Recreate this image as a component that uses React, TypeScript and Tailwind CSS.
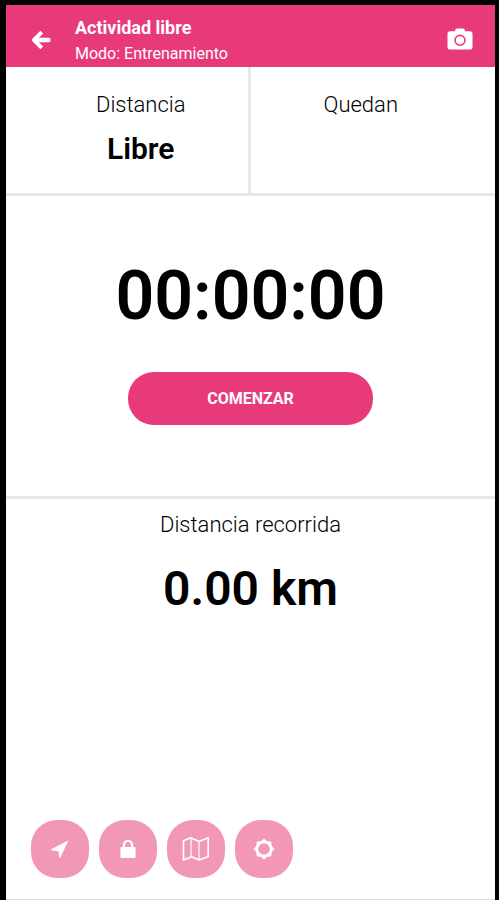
import React from "react";

interface IconProps {
  className?: string;
}

const BackIcon: React.FC<IconProps> = ({ className }) => (
  <svg viewBox="0 0 20 20" className={className} fill="none" stroke="currentColor">
    <path
      d="M10.800 2.200 3 10l7.800 7.800"
      strokeWidth="4"
      strokeLinejoin="round"
    />
    <path d="M4 10h13.500" strokeWidth="4.400" strokeLinecap="round" />
  </svg>
);

const CameraIcon: React.FC<IconProps> = ({ className }) => (
  <svg viewBox="0 0 26 22" className={className} fill="none">
    <path
      fill="currentColor"
      d="M8.500 1.500Q9 .5 10.300 .5h5.400q1.300 0 1.800 1l.8 1.800h4.700q2.500 0 2.500 2.500v13.200q0 2.500-2.500 2.500H3q-2.500 0-2.500-2.500V5.800q0-2.500 2.500-2.500h4.700z"
    />
    <circle cx="13" cy="12.300" r="4.900" stroke="#e83a7b" strokeWidth="1.600" />
  </svg>
);

const NavigateIcon: React.FC<IconProps> = ({ className }) => (
  <svg viewBox="0 0 20 20" className={className} fill="currentColor">
    <path d="M18.600 1.200 10.300 18.600Q9.700 19.600 9.200 18.500L8.600 12.200 1.200 11.300Q.3 10.800 1.300 10.200Z" />
  </svg>
);

const LockIcon: React.FC<IconProps> = ({ className }) => (
  <svg viewBox="0 0 16 20" className={className} fill="none">
    <path d="M4 9V5.800a4 4 0 0 1 8 0V9" stroke="currentColor" strokeWidth="2.200" />
    <rect x=".5" y="8" width="15" height="11" rx="1" fill="currentColor" />
  </svg>
);

const MapIcon: React.FC<IconProps> = ({ className }) => (
  <svg
    viewBox="0 0 28 26"
    className={className}
    fill="none"
    stroke="currentColor"
    strokeLinejoin="round"
  >
    <path d="M1.500 4.800 8.700 1.800 17 5.500 26.200 1.800V20.500L17 24 9.500 20.800 1.500 24Z" strokeWidth="1.700" />
    <path d="M9 2v18.800M17 5.500V24" strokeWidth="1.200" />
  </svg>
);

const SettingsIcon: React.FC<IconProps> = ({ className }) => (
  <svg viewBox="0 0 22 22" className={className} fill="currentColor">
    <path
      fillRule="evenodd"
      d="M11 .5 13.700 3.100 18 3.500 18.800 8 21.500 11 18.800 14 18.200 18.200 13.700 18.900 11 21.500 8.300 18.900 3.800 18.200 3.200 14 .5 11 3.200 8 4 3.500 8.300 3.100ZM11 5.200A5.800 5.800 0 1 0 11 16.800A5.800 5.800 0 1 0 11 5.200Z"
    />
  </svg>
);

const tools = [
  { label: "Ubicación", icon: <NavigateIcon className="h-5 w-5" /> },
  { label: "Bloquear", icon: <LockIcon className="h-5 w-4" /> },
  { label: "Mapa", icon: <MapIcon className="h-[26px] w-7" /> },
  { label: "Ajustes", icon: <SettingsIcon className="h-[22px] w-[22px]" /> },
];

const App: React.FC = () => {
  return (
    <div className="flex min-h-screen flex-col bg-black pt-[5px] pr-1 pl-[6px] font-[Roboto,sans-serif] text-black">
      {/* Header */}
      <header className="flex h-[62px] items-center bg-[#e83a7b] pr-[22px] pl-[25px] text-white">
        <button type="button" aria-label="Volver" className="pt-2">
          <BackIcon className="h-5 w-5" />
        </button>
        <div className="ml-6 flex-1 pt-[9px]">
          <h1 className="text-lg leading-[26px] font-bold">Actividad libre</h1>
          <p className="text-base leading-[26px]">Modo: Entrenamiento</p>
        </div>
        <button type="button" aria-label="Cámara" className="pt-[6px]">
          <CameraIcon className="h-[22px] w-[26px]" />
        </button>
      </header>

      <main className="flex flex-1 flex-col border-b border-[#dedede] bg-white text-center">
        {/* Target distance */}
        <section className="grid h-[129px] grid-cols-2 border-b-[3px] border-[#e8e8e8]">
          <div className="border-r-[3px] border-[#e8e8e8] pt-[26px] pl-7">
            <h2 className="text-[22px] leading-6 font-light">Distancia</h2>
            <p className="mt-3 text-[30px] leading-10 font-semibold">Libre</p>
          </div>
          <div className="pt-[26px] pr-6">
            <h2 className="text-[22px] leading-6 font-light">Quedan</h2>
          </div>
        </section>

        {/* Timer */}
        <section className="flex flex-col items-center border-b-[3px] border-[#e8e8e8] pt-[60px] pb-[71px]">
          <p className="text-[68px] leading-[80px] font-semibold">00:00:00</p>
          <button
            type="button"
            className="mt-9 h-[53px] w-1/2 rounded-[26px] bg-[#e83a7b] text-base font-bold text-white"
          >
            COMENZAR
          </button>
        </section>

        {/* Covered distance */}
        <section className="flex-1 pt-[14px]">
          <h2 className="text-[22px] leading-6 font-light">Distancia recorrida</h2>
          <p className="mt-[22px] text-[48px] leading-[60px] font-semibold">0.00 km</p>
        </section>

        <nav className="flex gap-[10px] px-[25px] pb-[21px]">
          {tools.map((tool) => (
            <button
              key={tool.label}
              type="button"
              aria-label={tool.label}
              className="flex h-[58px] w-[58px] items-center justify-center rounded-[26px] bg-[#f397b9] text-white"
            >
              {tool.icon}
            </button>
          ))}
        </nav>
      </main>
    </div>
  );
};

export default App;
